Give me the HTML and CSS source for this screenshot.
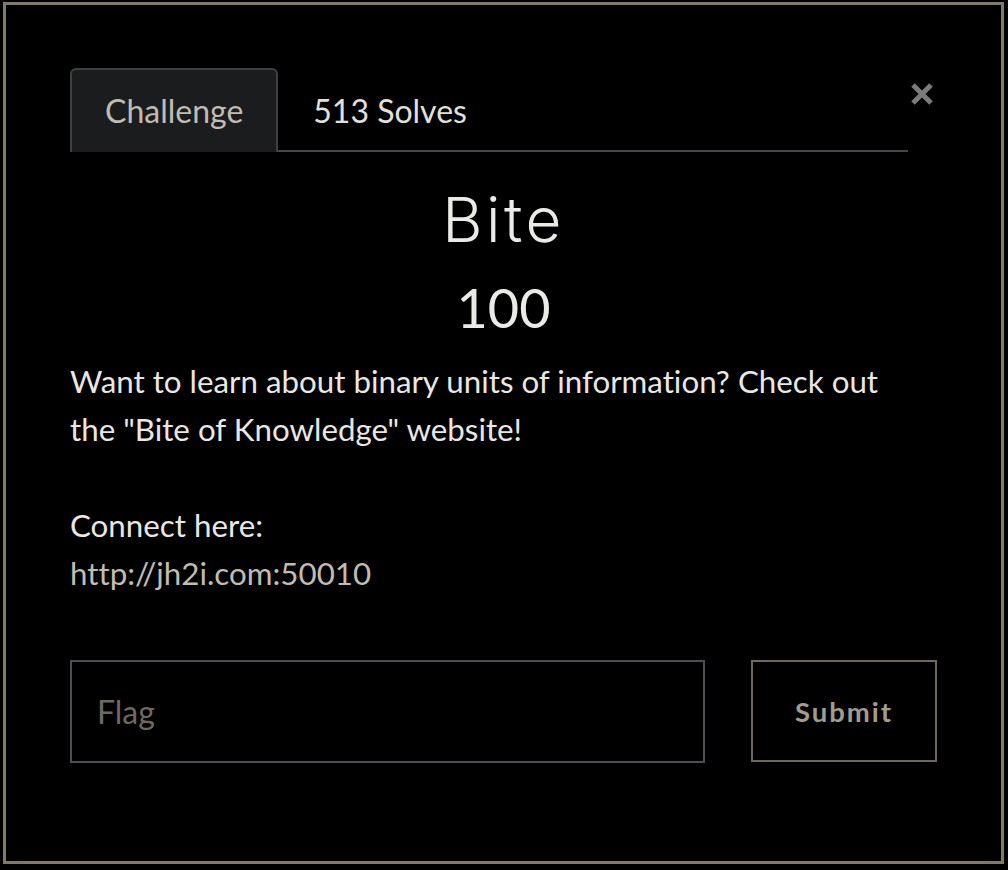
FILE: index.html
```html
<!DOCTYPE html>
<html>
<head>
<meta charset="utf-8">
<link rel="stylesheet" href="styles.css">
</head>
<body>
<div class="modal">
  <div class="modal-body">
    <div class="header">
      <nav class="tabs">
        <div class="tab active">Challenge</div>
        <div class="tab">513 Solves</div>
      </nav>
      <div class="close">
        <svg width="24" height="24" viewBox="0 0 24 24"><path d="M3 3 L21 21 M21 3 L3 21" stroke="#7b7b7b" stroke-width="5" stroke-linecap="butt"/></svg>
      </div>
    </div>
    <h1 class="title">Bite</h1>
    <h2 class="value">100</h2>
    <div class="desc">
      <p>Want to learn about binary units of information? Check out the "Bite of Knowledge" website!</p>
      <p>Connect here:<br><a class="link">http://jh2i.com:50010</a></p>
    </div>
    <div class="submit-row">
      <div class="flag-input">Flag</div>
      <div class="submit-btn">Submit</div>
    </div>
  </div>
</div>
</body>
</html>
```
FILE: styles.css
```css
html, body {
  margin: 0;
  padding: 0;
  background: #000;
}
body {
  width: 1008px;
  height: 870px;
  overflow: hidden;
  font-family: Lato, "Open Sans", sans-serif;
  font-variant-ligatures: none;
}
.modal {
  margin: 2px 4px 0 3px;
  height: 856px;
  border: 3px solid #827968;
  background: #000;
}
.modal-body {
  padding: 63px 64px 0 64px;
}
.header {
  display: flex;
  align-items: flex-start;
}
.tabs {
  flex: 1;
  display: flex;
  border-bottom: 2px solid #45484b;
}
.tab {
  height: 80px;
  padding: 0 33px 2px;
  display: flex;
  align-items: center;
  font-size: 32px;
  color: #e2e0dc;
  border: 2px solid transparent;
  border-bottom: 0;
  margin-bottom: -2px;
  border-radius: 6px 6px 0 0;
}
.tab.active {
  background: #1b1c1e;
  border-color: #3e4144;
  color: #c1bcb2;
}
.close {
  width: 24px;
  margin-left: 2px;
  margin-right: 3px;
  padding-top: 14px;
  display: flex;
  justify-content: center;
}
.title {
  margin: 28px 0 0;
  text-align: center;
  font-family: Inter, Lato, sans-serif;
  font-weight: 300;
  font-size: 62px;
  line-height: 80px;
  color: #ebeae7;
  letter-spacing: 3.5px;
}
.value {
  margin: 12px 0 0;
  text-align: center;
  font-weight: 400;
  font-size: 54px;
  line-height: 72px;
  color: #ebeae7;
}
.desc {
  margin-top: 13px;
  font-size: 31.3px;
  line-height: 48px;
  color: #e9e7e3;
  padding-right: 30px;
}
.desc p {
  margin: 0 0 48px;
}
.link {
  color: #c1bcb2;
  text-decoration: none;
}
.submit-row {
  display: flex;
  margin-top: 63px;
  gap: 46px;
}
.flag-input {
  flex: 1;
  height: 99px;
  border: 2px solid #4a4f54;
  display: flex;
  align-items: center;
  padding-left: 25px;
  font-size: 32px;
  font-weight: 400;
  color: #6f6a61;
}
.submit-btn {
  width: 182px;
  height: 98px;
  border: 2px solid #6f675a;
  display: flex;
  align-items: center;
  justify-content: center;
  font-size: 27.5px;
  font-weight: 700;
  letter-spacing: 2px;
  color: #a29c8f;
}
```
